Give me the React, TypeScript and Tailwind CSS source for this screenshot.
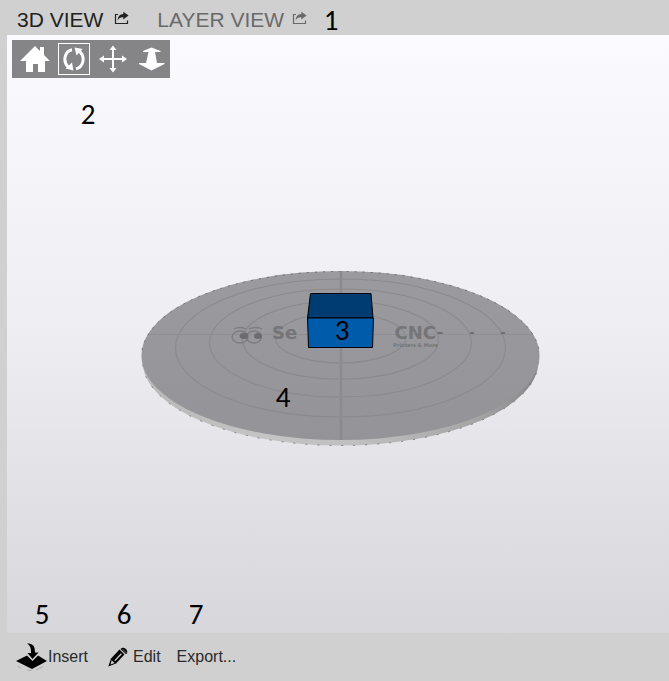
import { useState } from "react";
import type { ReactNode } from "react";

type View = "3d" | "layer";
type Tool = "home" | "rotate" | "pan" | "scale";

function ShareIcon() {
  return (
    <svg width="15" height="14" viewBox="0 0 15 14" fill="none" aria-hidden="true">
      <path d="M4 3.5H1.5v9h12V9.5" stroke="currentColor" strokeWidth="1.2" />
      <path d="M9.3 0.8L14.6 4.6L9.3 8.4V6.2C6.6 6 5 6.9 3.6 9.3C3.9 5.6 5.8 3.2 9.3 3Z" fill="currentColor" />
    </svg>
  );
}

function HomeIcon() {
  return (
    <svg width="30" height="28" viewBox="0 0 30 28" fill="white" aria-hidden="true">
      <path d="M15 1L20 6V2H24V10L30 16H25V27H18V19H13V27H6V16H0Z" />
    </svg>
  );
}

function RotateIcon() {
  return (
    <svg width="24" height="26" viewBox="0 0 24 26" fill="none" aria-hidden="true">
      <path d="M10 3.8C3.4 5 -0.1 14.5 6.2 21" stroke="white" strokeWidth="3" />
      <path d="M3.6 22.6L11.4 24.6L10 16.6Z" fill="white" />
      <path d="M14 22.8C20.6 21.6 24.1 12 17.8 5.5" stroke="white" strokeWidth="3" />
      <path d="M12.6 1.4L20.6 3L14.4 9.6Z" fill="white" />
    </svg>
  );
}

function PanIcon() {
  return (
    <svg width="28" height="28" viewBox="0 0 28 28" aria-hidden="true">
      <path d="M14 3V25M3 14H25" stroke="white" strokeWidth="2" />
      <path
        d="M14 0.5L17.5 5H10.5ZM14 27.5L17.5 23H10.5ZM0 14L5 10.5V17.5ZM28 14L23 10.5V17.5Z"
        fill="white"
      />
    </svg>
  );
}

function ScaleIcon() {
  return (
    <svg width="26" height="24" viewBox="0 0 26 24" fill="white" aria-hidden="true">
      <path d="M12.5 0.5L21.5 4V5H16L18 16H25.5V17L12.5 23.5L0 17V16H7L9.5 5H4V4Z" />
    </svg>
  );
}

function InsertIcon() {
  return (
    <svg width="32" height="28" viewBox="0 0 32 28" aria-hidden="true">
      <path d="M2 23L5 25M11 27L16 28M27 23.5L20 27" stroke="#aaaaaa" fill="none" />
      <path d="M0 18L11 12.5L16.5 18L22 12.5L31 18L16 26Z" fill="black" />
      <path d="M11 0.5C17 0.5 19 3 19 9.5H22.5L16.5 16L11.5 10H15C15.2 5 14 2.3 11 0.5Z" fill="black" />
    </svg>
  );
}

function EditIcon() {
  return (
    <svg width="21" height="21" viewBox="0 0 21 21" aria-hidden="true">
      <path d="M0.3 19.5L3 11.5L11.5 2.6L16.5 7.6L8 16.4Z" fill="black" />
      <path d="M13 1.6C15 -0.8 20.6 2.6 19 6.4L17.8 7L12.6 2.2Z" fill="black" />
      <path d="M6.8 13.6L13.4 6.8" stroke="#d0d0d0" strokeWidth="1.3" />
      <path d="M3.6 13.2L6.6 16L2.6 17.4Z" fill="#d0d0d0" />
      <path d="M14.3 1.8L18.6 6.1" stroke="#d0d0d0" strokeWidth="0.6" />
    </svg>
  );
}

function Callout({ children, className = "" }: { children: ReactNode; className?: string }) {
  return (
    <span className={`block w-4 text-center font-[Carlito,Lato,sans-serif] text-[29px] leading-8 text-black ${className}`}>
      {children}
    </span>
  );
}

const rings = [
  { cy: 338, rx: 65, ry: 25 },
  { cy: 340, rx: 98, ry: 39 },
  { cy: 343, rx: 131, ry: 54 },
  { cy: 348, rx: 165, ry: 69 },
];

function BuildPlate() {
  return (
    <svg width="401" height="177" viewBox="140 270 401 177" role="img" aria-label="Build plate with a blue part">
      <defs>
        <linearGradient id="rim" x1="0" x2="1">
          <stop offset="0" stopColor="#b8b8b9" />
          <stop offset="0.3" stopColor="#c4c4c5" />
          <stop offset="0.55" stopColor="#bfbfbf" />
          <stop offset="0.85" stopColor="#a4a4a5" />
          <stop offset="1" stopColor="#858587" />
        </linearGradient>
        <linearGradient id="plate" x1="0" x2="0" y1="0" y2="1">
          <stop offset="0" stopColor="#9b9a9e" />
          <stop offset="1" stopColor="#949397" />
        </linearGradient>
      </defs>
      <ellipse cx="340.5" cy="361" rx="198" ry="84.5" fill="url(#rim)" />
      <ellipse cx="340.5" cy="361" rx="198" ry="84.5" fill="none" stroke="#6b6b6d" strokeWidth="0.8" strokeDasharray="2 10" />
      <ellipse cx="340.5" cy="355.5" rx="199" ry="84.5" fill="url(#plate)" />
      <path
        d="M142 350A199 84.5 0 0 1 539 350"
        fill="none"
        stroke="#555557"
        strokeWidth="0.7"
        strokeDasharray="2 6"
      />
      <g fill="none" stroke="#8b8a8e">
        {rings.map((r) => (
          <ellipse key={r.rx} cx="340.5" cy={r.cy} rx={r.rx} ry={r.ry} strokeWidth="1.2" />
        ))}
        <path d="M149 334.5H533" stroke="#8f8e92" />
        <path d="M341 271V440" strokeWidth="2.5" />
      </g>
      <g fill="none" stroke="#7d7c7f" strokeWidth="1.4">
        <ellipse cx="240" cy="337" rx="8" ry="6" />
        <ellipse cx="254" cy="337" rx="7.5" ry="6" />
        <path d="M234 329C237 327 243 327 246 329M249 329C253 327 259 327 262 329" />
      </g>
      <g fill="#6c6b6e">
        <ellipse cx="244" cy="336" rx="4.5" ry="3" />
        <ellipse cx="258" cy="336" rx="4" ry="3" />
        <ellipse cx="440" cy="333" rx="3" ry="1" />
        <ellipse cx="472" cy="333" rx="2.5" ry="1.1" />
        <ellipse cx="503" cy="333" rx="2.5" ry="1.1" />
      </g>
      <g fill="#757477" className="font-['DejaVu_Sans',sans-serif] font-bold">
        <text x="272" y="339" fontSize="18">
          Se
        </text>
        <text x="436" y="339" fontSize="18" textAnchor="end">
          CNC
        </text>
        <text x="438" y="347" fontSize="5" textAnchor="end">
          Printers &amp; More
        </text>
      </g>
      <g stroke="black" strokeLinejoin="round">
        <path d="M310.5 293.5H371L373 318H307.5Z" fill="#003c71" />
        <path d="M307.5 318H373.5L372.5 347.5H308.5Z" fill="#005bab" />
      </g>
      <g textAnchor="middle" fontSize="29" className="font-[Carlito,Lato,sans-serif]">
        <text x="342" y="340">3</text>
        <text x="283" y="407">4</text>
      </g>
    </svg>
  );
}

const tools: { id: Tool; label: string; icon: ReactNode }[] = [
  { id: "home", label: "Reset view", icon: <HomeIcon /> },
  { id: "rotate", label: "Rotate", icon: <RotateIcon /> },
  { id: "pan", label: "Pan", icon: <PanIcon /> },
  { id: "scale", label: "Zoom", icon: <ScaleIcon /> },
];

export default function App() {
  const [view, setView] = useState<View>("3d");
  const [tool, setTool] = useState<Tool>("rotate");

  return (
    <div className="flex min-h-screen flex-col bg-[#d0d0d0] font-['Liberation_Sans',Arial,sans-serif] text-[#2a2a2a]">
      <header className="flex h-[35px] items-center pt-1 pl-[17px] text-[21px] leading-6">
        <button
          type="button"
          onClick={() => setView("3d")}
          className={`flex items-center gap-[11px] whitespace-nowrap ${view === "3d" ? "text-[#222222]" : "text-[#6a6a6a]"}`}
        >
          3D VIEW
          <span className="pb-1"><ShareIcon /></span>
        </button>
        <button
          type="button"
          onClick={() => setView("layer")}
          className={`ml-7 flex items-center gap-2 whitespace-nowrap ${view === "layer" ? "text-[#222222]" : "text-[#6a6a6a]"}`}
        >
          LAYER VIEW
          <span className="pb-1"><ShareIcon /></span>
        </button>
        <Callout className="ml-4">1</Callout>
      </header>

      <main className="ml-[7px] flex flex-1 flex-col bg-linear-to-b from-[#fbfbff] via-[#eeedf2] to-[#d7d6db] pt-[5px] pb-[3px] pl-[5px]">
        <div role="toolbar" aria-label="View tools" className="flex h-[38px] w-[158px] items-center gap-[7px] bg-[#858587] pl-[7px]">
          {tools.map((t) => (
            <button
              key={t.id}
              type="button"
              aria-label={t.label}
              aria-pressed={tool === t.id}
              onClick={() => setTool(t.id)}
              className={`flex size-8 items-center justify-center border ${tool === t.id ? "border-white" : "border-transparent"}`}
            >
              <span className="shrink-0">{t.icon}</span>
            </button>
          ))}
        </div>
        <Callout className="mt-5 ml-17">2</Callout>
        <div className="flex flex-1 items-center justify-center pb-3">
          <BuildPlate />
        </div>
        <div className="flex pl-[22px]">
          <Callout>5</Callout>
          <Callout className="ml-[66px]">6</Callout>
          <Callout className="ml-14">7</Callout>
        </div>
      </main>

      <footer className="flex h-12 items-center pl-4 text-base leading-5">
        <button type="button" className="flex items-center">
          <InsertIcon />
          Insert
        </button>
        <button type="button" className="ml-5 flex items-center gap-1">
          <EditIcon />
          Edit
        </button>
        <button type="button" className="ml-4">
          Export...
        </button>
      </footer>
    </div>
  );
}
